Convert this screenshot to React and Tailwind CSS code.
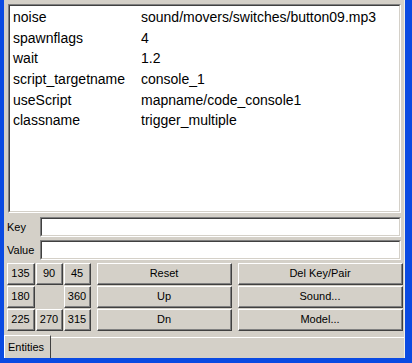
import React from "react";

const rows = [
  ["noise", "sound/movers/switches/button09.mp3"],
  ["spawnflags", "4"],
  ["wait", "1.2"],
  ["script_targetname", "console_1"],
  ["useScript", "mapname/code_console1"],
  ["classname", "trigger_multiple"],
];

function Btn({ children, className = "" }) {
  return (
    <div
      className={
        "border-t border-l border-t-white border-l-white border-b border-r border-b-[#404040] border-r-[#404040] bg-[#d4d0c8] " +
        className
      }
    >
      <div className="h-full w-full flex items-center justify-center border-b border-r border-b-[#808080] border-r-[#808080] text-[11px] text-black leading-none">
        {children}
      </div>
    </div>
  );
}

function Sunken({ children, className = "" }) {
  return (
    <div
      className={
        "border border-t-[#808080] border-l-[#808080] border-b-white border-r-white " +
        className
      }
    >
      <div className="h-full w-full border border-t-[#404040] border-l-[#404040] border-b-[#d4d0c8] border-r-[#d4d0c8] bg-white">
        {children}
      </div>
    </div>
  );
}

export default function App() {
  return (
    <div
      className="w-[412px] h-[363px] flex overflow-hidden bg-[#0a4ae2] pl-[4px] pr-[7px] pb-[5px]"
      style={{ fontFamily: '"Liberation Sans", Arial, sans-serif' }}
    >
      <div className="flex-1 flex flex-col bg-[#d4d0c8] border-r border-r-[#f0efe8]">
        <div className="h-[4px] relative overflow-hidden">
          <div className="absolute left-[191px] -top-[12px] text-[14px] leading-none text-black tracking-[1px]">
            .....
          </div>
        </div>
        <Sunken className="ml-[4px] mr-[3px] h-[209px]">
          <div className="pt-[1px] pl-[3px]">
            {rows.map(([k, v]) => (
              <div key={k} className="flex h-[20.7px] items-center text-[14px] text-black">
                <div className="w-[128px]">{k}</div>
                <div>{v}</div>
              </div>
            ))}
          </div>
        </Sunken>
        <div className="mt-[4px] h-[20px] flex items-center">
          <div className="w-[36px] pl-[3px] text-[11px] text-black">Key</div>
          <Sunken className="flex-1 mr-[3px] h-[20px]" />
        </div>
        <div className="mt-[3px] h-[20px] flex items-center">
          <div className="w-[36px] pl-[3px] text-[11px] text-black">Value</div>
          <Sunken className="flex-1 mr-[3px] h-[20px]" />
        </div>
        <div className="mt-[3px] pl-[3px] flex h-[68px]">
          <div className="grid grid-cols-[28px_27px_27px] grid-rows-[22px_22px_22px] gap-[1px]">
            <Btn>135</Btn>
            <Btn>90</Btn>
            <Btn>45</Btn>
            <Btn>180</Btn>
            <div />
            <Btn>360</Btn>
            <Btn>225</Btn>
            <Btn>270</Btn>
            <Btn>315</Btn>
          </div>
          <div className="ml-[6px] w-[135px] grid grid-rows-[22px_22px_22px] gap-[1px]">
            <Btn>Reset</Btn>
            <Btn>Up</Btn>
            <Btn>Dn</Btn>
          </div>
          <div className="ml-[6px] w-[165px] grid grid-rows-[22px_22px_22px] gap-[1px]">
            <Btn>Del Key/Pair</Btn>
            <Btn>Sound...</Btn>
            <Btn>Model...</Btn>
          </div>
        </div>
        <div className="mt-[4px] flex-1 flex items-end">
          <div className="h-[23px] w-[47px] border-t border-l border-t-white border-l-white border-r border-r-[#404040] flex items-center pl-[3px] text-[11px] text-black">
            Entities
          </div>
          <div className="flex-1 h-[21px] border-t border-t-white" />
        </div>
      </div>
    </div>
  );
}
